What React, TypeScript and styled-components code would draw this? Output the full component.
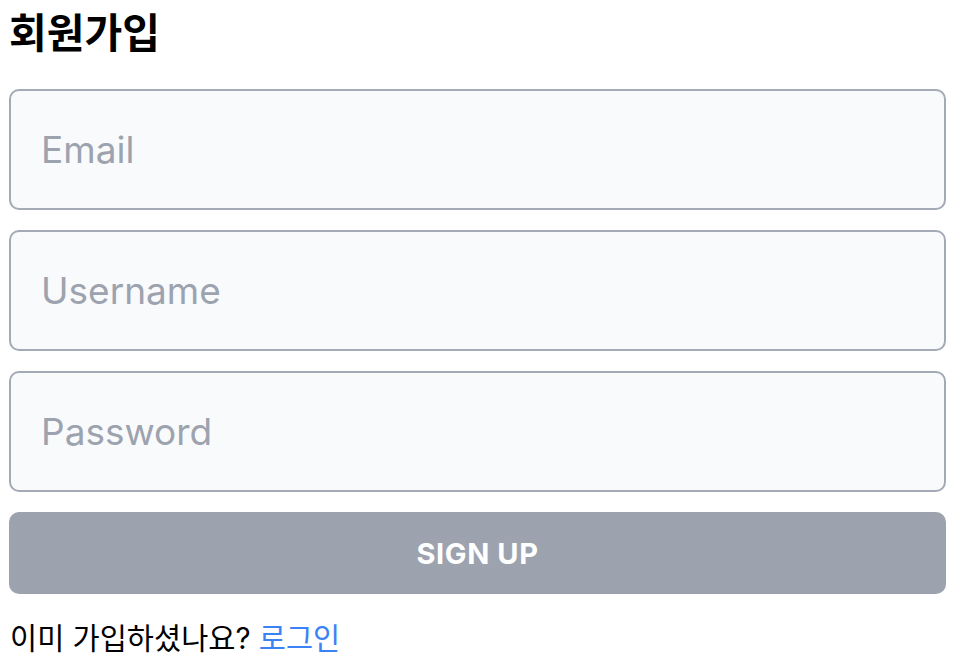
import React from 'react'
import styled, { createGlobalStyle } from 'styled-components'

const GlobalStyle = createGlobalStyle`
  html, body {
    margin: 0;
    padding: 0;
    background: #ffffff;
  }
  body {
    font-family: Inter, 'Noto Sans CJK KR', sans-serif;
    color: #111111;
  }
`

const Page = styled.main`
  display: flex;
  flex-direction: column;
  gap: 20px;
  padding: 8px 14px 0 9px;
  box-sizing: border-box;
  width: 960px;
`

const Title = styled.h1`
  margin: 0 0 11px 0;
  font-size: 41px;
  line-height: 50px;
  font-weight: 700;
  color: #000000;
`

const Field = styled.input`
  box-sizing: border-box;
  width: 100%;
  height: 121px;
  padding: 0 30px;
  border: 2px solid #a3aab6;
  border-radius: 10px;
  background: #f9fafb;
  font-family: Inter, 'Noto Sans CJK KR', sans-serif;
  font-size: 37px;
  color: #111827;
  outline: none;

  &::placeholder {
    color: #9ca3af;
  }
`

const SubmitButton = styled.button`
  height: 82px;
  width: 100%;
  border: none;
  border-radius: 10px;
  background: #9ca3af;
  color: #ffffff;
  font-family: Inter, sans-serif;
  font-size: 29px;
  font-weight: 700;
  letter-spacing: 0.6px;
  text-transform: uppercase;
  cursor: not-allowed;
`

const Footer = styled.p`
  margin: 4px 0 0 1px;
  font-size: 29.5px;
  line-height: 40px;
  color: #000000;
`

const LoginLink = styled.a`
  color: #3b82f6;
  text-decoration: none;
`

export default function App() {
  return (
    <>
      <GlobalStyle />
      <Page>
        <Title>회원가입</Title>
        <Field type="email" placeholder="Email" />
        <Field type="text" placeholder="Username" />
        <Field type="password" placeholder="Password" />
        <SubmitButton type="submit" disabled>
          Sign up
        </SubmitButton>
        <Footer>
          이미 가입하셨나요? <LoginLink href="#login">로그인</LoginLink>
        </Footer>
      </Page>
    </>
  )
}
